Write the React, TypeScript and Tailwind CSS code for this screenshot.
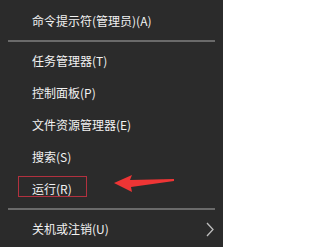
const font = { fontFamily: '"Noto Sans CJK SC", "Noto Sans", sans-serif' };

function Item({ label, children }: { label: string; children?: React.ReactNode }) {
  return (
    <div className="relative flex h-8 items-center pl-8 pr-2 text-[12px] text-[#f2f2f2]">
      <span className="leading-none">{label}</span>
      {children}
    </div>
  );
}

function Separator() {
  return (
    <div className="flex h-2 items-center pl-2 pr-2">
      <div className="h-[2px] w-full bg-[#6a6a6a]" />
    </div>
  );
}

export default function App() {
  return (
    <div className="h-[247px] w-[223px] overflow-hidden bg-[#2b2b2b] pt-[5px]" style={font}>
      <Item label="命令提示符(管理员)(A)" />
      <Separator />
      <Item label="任务管理器(T)" />
      <Item label="控制面板(P)" />
      <Item label="文件资源管理器(E)" />
      <Item label="搜索(S)" />
      <Item label="运行(R)">
        <div className="absolute left-[18px] top-[3px] h-[21px] w-[69px] border border-[#b2313f]" />
        <svg className="absolute left-[113px] top-[2px]" width="62" height="20" viewBox="0 0 62 20">
          <polygon points="1,8 19,0 17,5 61,4 61,6 18,12 19,17" fill="#ee3535" />
        </svg>
      </Item>
      <Separator />
      <Item label="关机或注销(U)">
        <svg className="absolute left-[205px] top-[9px]" width="10" height="15" viewBox="0 0 10 15">
          <polyline points="2,1 8,7.5 2,14" fill="none" stroke="#bdbdbd" strokeWidth="1.3" />
        </svg>
      </Item>
    </div>
  );
}
